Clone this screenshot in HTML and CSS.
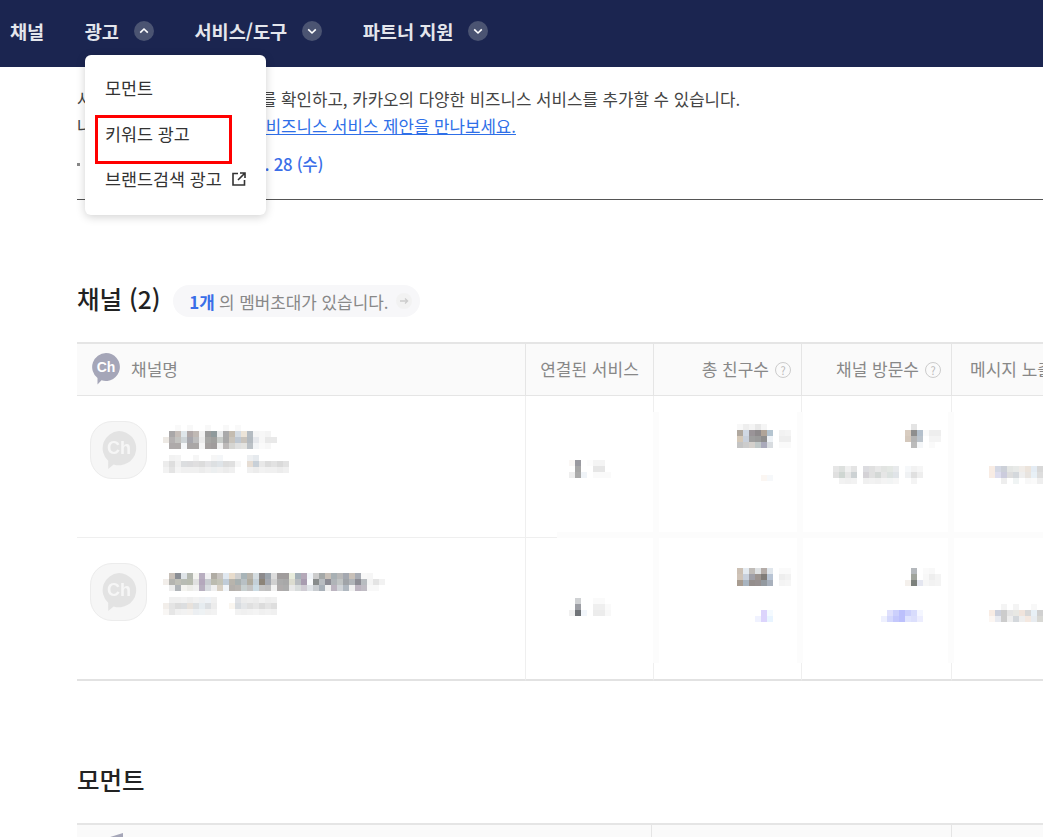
FILE: index.html
```html
<!DOCTYPE html>
<html lang="ko">
<head>
<meta charset="utf-8">
<title>비즈니스 대시보드</title>
<link rel="stylesheet" href="styles.css">
</head>
<body>
<header class="gnb">
  <a class="gnb-item">채널</a>
  <a class="gnb-item">광고<span class="chev"><svg viewBox="0 0 20 20" width="20" height="20"><path d="M6.2 11.6 10 8l3.8 3.6" /></svg></span></a>
  <a class="gnb-item">서비스/도구<span class="chev"><svg viewBox="0 0 20 20" width="20" height="20"><path d="M6.2 8.4 10 12l3.8-3.6" /></svg></span></a>
  <a class="gnb-item">파트너 지원<span class="chev"><svg viewBox="0 0 20 20" width="20" height="20"><path d="M6.2 8.4 10 12l3.8-3.6" /></svg></span></a>
</header>

<nav class="dropdown">
  <a class="drop-item">모먼트</a>
  <a class="drop-item">키워드 광고</a>
  <a class="drop-item">브랜드검색 광고<svg class="ext" viewBox="0 0 14 14" width="14" height="14"><path d="M6 1.5H1v11.5h11.5V8M8 1h5v5M13 1 6 8" /></svg></a>
</nav>
<div class="annotation"></div>

<main class="page">
  <section class="intro">
    <p class="intro-line">사용 중인 서비스 현황정보를 확인하고, 카카오의 다양한 비즈니스 서비스를 추가할 수 있습니다.</p>
    <p class="intro-line">나에게 꼭맞는 카카오 추천 <a class="intro-link">비즈니스 서비스 제안을 만나보세요.</a></p>
    <p class="intro-meta"><i class="dot"></i>최근 접속일 <b class="date">2024. 10. 28 (수)</b></p>
  </section>

  <section class="block">
    <div class="block-head">
      <h2 class="block-title">채널 (2)</h2>
      <a class="pill"><b class="pill-num">1개</b> 의 멤버초대가 있습니다.<span class="pill-go"><svg viewBox="0 0 16 16" width="16" height="16"><path d="M4 8h7.5M9 5.6 11.6 8 9 10.4" /></svg></span></a>
    </div>
    <div class="table-wrap">
      <table class="tbl">
        <colgroup><col class="w1"><col class="w2"><col class="w3"><col class="w4"><col class="w5"></colgroup>
        <thead>
          <tr>
            <th class="th-name"><span class="th-flex"><svg class="ch-mark" viewBox="0 0 28 32" width="28" height="32"><path class="ch-fill" d="M14 0a14 14 0 1 1-4.500 27.300L5.500 31.500V25A14 14 0 0 1 14 0Z"/><text class="ch-text" x="14" y="18.500" text-anchor="middle">Ch</text></svg>채널명</span></th>
            <th class="th-c">연결된 서비스</th>
            <th class="th-r">총 친구수<span class="q">?</span></th>
            <th class="th-r">채널 방문수<span class="q">?</span></th>
            <th class="th-l">메시지 노출수</th>
          </tr>
        </thead>
        <tbody>
          <tr class="r1">
            <td class="td-name"><div class="name-flex">
              <span class="avatar"><svg viewBox="0 0 40 44" width="36" height="40"><path class="av-fill" d="M20 1a19 19 0 1 1-6 37l-6 5v-9A19 19 0 0 1 20 1Z"/><text class="av-text" x="20" y="26" text-anchor="middle">Ch</text></svg></span>
              <div class="name-text">
                <svg class="mosaic" width="120" height="24" viewBox="0 0 20 4">
                  <rect x="2" y="0" fill="#f9f9f9"/><rect x="4" y="0" fill="#f8f8f8"/><rect x="7" y="0" fill="#f8f8f8"/><rect x="10" y="0" fill="#f8f8f8"/><rect x="12" y="0" fill="#f9f9f9"/>
                  <rect x="1" y="1" fill="#a9a7a8"/><rect x="2" y="1" fill="#c5bdb8"/><rect x="3" y="1" fill="#dfe6ea"/><rect x="4" y="1" fill="#b0a8a8"/><rect x="5" y="1" fill="#c0b9b4"/><rect x="6" y="1" fill="#f2f2f2"/><rect x="7" y="1" fill="#9c9c9c"/><rect x="8" y="1" fill="#8f9a9c"/><rect x="9" y="1" fill="#e8eaeb"/><rect x="10" y="1" fill="#a9a9aa"/><rect x="11" y="1" fill="#c4bcb0"/><rect x="12" y="1" fill="#d4dbe2"/><rect x="13" y="1" fill="#ece4d8"/><rect x="14" y="1" fill="#b5bcc2"/><rect x="15" y="1" fill="#f5f5f5"/><rect x="16" y="1" fill="#f7f7f7"/><rect x="17" y="1" fill="#f4f4f4"/>
                  <rect x="0" y="2" fill="#ede9e4"/><rect x="1" y="2" fill="#b4b1b1"/><rect x="2" y="2" fill="#c3c3c0"/><rect x="3" y="2" fill="#ced4d7"/><rect x="4" y="2" fill="#a7a7ad"/><rect x="5" y="2" fill="#bdbdbd"/><rect x="6" y="2" fill="#ececec"/><rect x="7" y="2" fill="#a6a6a4"/><rect x="8" y="2" fill="#a0a09e"/><rect x="9" y="2" fill="#c8ccc9"/><rect x="10" y="2" fill="#a8a8a8"/><rect x="11" y="2" fill="#c9c4bc"/><rect x="12" y="2" fill="#bfc8d2"/><rect x="13" y="2" fill="#c9c4bd"/><rect x="14" y="2" fill="#b3bac0"/><rect x="15" y="2" fill="#e6e8ec"/><rect x="16" y="2" fill="#f7f7f7"/><rect x="17" y="2" fill="#e9e9e9"/><rect x="18" y="2" fill="#e9e9e9"/>
                  <rect x="1" y="3" fill="#aeaaaa"/><rect x="2" y="3" fill="#aeaaa9"/><rect x="3" y="3" fill="#f5f7f9"/><rect x="4" y="3" fill="#a9a6a6"/><rect x="5" y="3" fill="#aaa7a6"/><rect x="6" y="3" fill="#f6f6f6"/><rect x="7" y="3" fill="#a4a09f"/><rect x="8" y="3" fill="#a09c9c"/><rect x="9" y="3" fill="#f0f0f0"/><rect x="10" y="3" fill="#bcb9b8"/><rect x="11" y="3" fill="#d5d5d2"/><rect x="12" y="3" fill="#dfe0e0"/><rect x="13" y="3" fill="#e3e3e0"/><rect x="14" y="3" fill="#bbc1c6"/><rect x="15" y="3" fill="#f2f4f6"/><rect x="16" y="3" fill="#fafafa"/><rect x="17" y="3" fill="#f7f7f7"/>
                </svg>
                <svg class="mosaic sub" width="126" height="18" viewBox="0 0 21 3">
                  <rect x="1" y="0" fill="#f2f2f2"/><rect x="2" y="0" fill="#f4f4f4"/><rect x="5" y="0" fill="#f6f6f6"/><rect x="8" y="0" fill="#f6f6f6"/><rect x="9" y="0" fill="#f4f6f8"/><rect x="14" y="0" fill="#eef0f2"/><rect x="15" y="0" fill="#e6eaee"/>
                  <rect x="0" y="1" fill="#ececec"/><rect x="1" y="1" fill="#dedede"/><rect x="2" y="1" fill="#f0f0f0"/><rect x="3" y="1" fill="#dcdee0"/><rect x="4" y="1" fill="#dcdcde"/><rect x="5" y="1" fill="#e0dfe0"/><rect x="6" y="1" fill="#dcdcdc"/><rect x="7" y="1" fill="#e4e4e6"/><rect x="8" y="1" fill="#dde0e2"/><rect x="9" y="1" fill="#dfe4e8"/><rect x="10" y="1" fill="#dddddd"/><rect x="11" y="1" fill="#e0e0e0"/><rect x="12" y="1" fill="#f6f6f6"/><rect x="14" y="1" fill="#e6ddd4"/><rect x="15" y="1" fill="#c8d0d8"/><rect x="16" y="1" fill="#e8e8e8"/><rect x="17" y="1" fill="#dcdcdc"/><rect x="18" y="1" fill="#e2e2e2"/><rect x="19" y="1" fill="#dadada"/><rect x="20" y="1" fill="#e2e2e2"/>
                  <rect x="0" y="2" fill="#f2f2f2"/><rect x="1" y="2" fill="#e4e4e4"/><rect x="2" y="2" fill="#f4f4f4"/><rect x="3" y="2" fill="#f0f0f0"/><rect x="4" y="2" fill="#f0f0f0"/><rect x="5" y="2" fill="#f0f0f0"/><rect x="6" y="2" fill="#ececec"/><rect x="7" y="2" fill="#f0f0f0"/><rect x="8" y="2" fill="#eceff0"/><rect x="9" y="2" fill="#f0f0f0"/><rect x="10" y="2" fill="#ececec"/><rect x="11" y="2" fill="#f0f0f0"/><rect x="14" y="2" fill="#f0f0f0"/><rect x="15" y="2" fill="#ececec"/><rect x="16" y="2" fill="#f2f2f2"/><rect x="17" y="2" fill="#f0f0f0"/><rect x="18" y="2" fill="#f0f0f0"/><rect x="19" y="2" fill="#ececec"/><rect x="20" y="2" fill="#f0f0f0"/>
                </svg>
              </div>
            </div></td>
            <td class="td-c"><svg class="mosaic svc-a" width="42" height="18" viewBox="0 0 7 3"><rect x="0" y="0" fill="#faf7f5"/><rect x="1" y="0" fill="#9a9aa0"/><rect x="3" y="0" fill="#fcfcfc"/><rect x="4" y="0" fill="#f4f4f4"/><rect x="5" y="0" fill="#f4f4f4"/><rect x="1" y="1" fill="#a6a6a6"/><rect x="4" y="1" fill="#e6e6e6"/><rect x="5" y="1" fill="#e6e6e6"/><rect x="0" y="2" fill="#eeeeee"/><rect x="1" y="2" fill="#aaaaaa"/><rect x="2" y="2" fill="#f0f4f8"/><rect x="4" y="2" fill="#fafafa"/><rect x="5" y="2" fill="#fafafa"/><rect x="6" y="2" fill="#fafafa"/></svg></td>
            <td class="td-r"><svg class="mosaic" width="54" height="24" viewBox="0 0 9 4"><rect x="0" y="0" fill="#f8f8f8"/><rect x="1" y="0" fill="#eeeeee"/><rect x="2" y="0" fill="#f4f4f4"/><rect x="3" y="0" fill="#e8e8e8"/><rect x="4" y="0" fill="#f5f5f5"/><rect x="0" y="1" fill="#b0a89f"/><rect x="1" y="1" fill="#d0d8e4"/><rect x="2" y="1" fill="#9a9498"/><rect x="3" y="1" fill="#8e8a8c"/><rect x="4" y="1" fill="#b0a498"/><rect x="5" y="1" fill="#b4c4d0"/><rect x="7" y="1" fill="#f2f2f2"/><rect x="8" y="1" fill="#f4f4f4"/><rect x="0" y="2" fill="#d4c8b8"/><rect x="1" y="2" fill="#c8d0dc"/><rect x="2" y="2" fill="#9e9e9e"/><rect x="3" y="2" fill="#9a9a9a"/><rect x="4" y="2" fill="#8e8e8e"/><rect x="5" y="2" fill="#eef2f6"/><rect x="7" y="2" fill="#eeeeee"/><rect x="8" y="2" fill="#eeeeee"/><rect x="0" y="3" fill="#c4c4c4"/><rect x="1" y="3" fill="#cccccc"/><rect x="2" y="3" fill="#d4d0cc"/><rect x="3" y="3" fill="#c0c8c8"/><rect x="4" y="3" fill="#aaaabb"/><rect x="5" y="3" fill="#d8dce0"/><rect x="7" y="3" fill="#fafafa"/><rect x="8" y="3" fill="#fafafa"/></svg>
              <svg class="mosaic faint-gap" width="12" height="6" viewBox="0 0 2 1"><rect x="0" y="0" fill="#fbf6f2"/><rect x="1" y="0" fill="#f6f8fa"/></svg></td>
            <td class="td-r"><svg class="mosaic" width="36" height="24" viewBox="0 0 6 4"><rect x="1" y="0" fill="#e4e4e4"/><rect x="0" y="1" fill="#d8ccc0"/><rect x="1" y="1" fill="#8e8e8e"/><rect x="2" y="1" fill="#b4c0cc"/><rect x="3" y="1" fill="#fafafa"/><rect x="4" y="1" fill="#eeeeee"/><rect x="5" y="1" fill="#eeeeee"/><rect x="0" y="2" fill="#d4c8bc"/><rect x="1" y="2" fill="#b4b4b4"/><rect x="2" y="2" fill="#bcc4cc"/><rect x="4" y="2" fill="#f4f4f4"/><rect x="5" y="2" fill="#f4f4f4"/><rect x="1" y="3" fill="#bbbbbb"/><rect x="2" y="3" fill="#f4f6f8"/><rect x="4" y="3" fill="#fafafa"/></svg>
              <svg class="mosaic second" width="108" height="18" viewBox="0 0 18 3"><rect x="0" y="0" fill="#e6e6e6"/><rect x="1" y="0" fill="#dde0de"/><rect x="2" y="0" fill="#f0f0f0"/><rect x="3" y="0" fill="#e4e4e4"/><rect x="5" y="0" fill="#dcdce0"/><rect x="6" y="0" fill="#e0e0e0"/><rect x="7" y="0" fill="#e8e8e8"/><rect x="8" y="0" fill="#e2e4e2"/><rect x="9" y="0" fill="#e4e8e4"/><rect x="10" y="0" fill="#e8eaec"/><rect x="12" y="0" fill="#f6f8fa"/><rect x="13" y="0" fill="#f2f2f2"/><rect x="14" y="0" fill="#f6f6f6"/><rect x="0" y="1" fill="#e0e0e0"/><rect x="1" y="1" fill="#cfd6d2"/><rect x="2" y="1" fill="#e6e6e6"/><rect x="3" y="1" fill="#cdd2d4"/><rect x="5" y="1" fill="#d4d2d6"/><rect x="6" y="1" fill="#e0e0e0"/><rect x="7" y="1" fill="#d4d8d6"/><rect x="8" y="1" fill="#e6e6e6"/><rect x="9" y="1" fill="#dce2e0"/><rect x="10" y="1" fill="#e0e4e8"/><rect x="12" y="1" fill="#f0f2f4"/><rect x="13" y="1" fill="#e0e0e0"/><rect x="14" y="1" fill="#eeeeee"/><rect x="1" y="2" fill="#f2f2f2"/><rect x="2" y="2" fill="#f0f0f0"/><rect x="3" y="2" fill="#f2f2f2"/><rect x="5" y="2" fill="#f0f0f0"/><rect x="6" y="2" fill="#f2f2f2"/><rect x="7" y="2" fill="#f0f0f0"/><rect x="8" y="2" fill="#f4f4f4"/><rect x="9" y="2" fill="#f2f4f4"/><rect x="10" y="2" fill="#f6f6f6"/><rect x="13" y="2" fill="#f4f4f4"/></svg></td>
            <td class="td-l"><svg class="mosaic msg-a" width="54" height="18" viewBox="0 0 9 3"><rect x="0" y="0" fill="#f8ece4"/><rect x="1" y="0" fill="#d4d8e4"/><rect x="2" y="0" fill="#ccd0d8"/><rect x="3" y="0" fill="#e4e6e4"/><rect x="4" y="0" fill="#e8eae8"/><rect x="5" y="0" fill="#f0ece8"/><rect x="6" y="0" fill="#ece4dc"/><rect x="7" y="0" fill="#e4ecf4"/><rect x="8" y="0" fill="#d8d8d8"/><rect x="0" y="1" fill="#f8ece4"/><rect x="1" y="1" fill="#ddddee"/><rect x="2" y="1" fill="#ccccdd"/><rect x="3" y="1" fill="#dddddd"/><rect x="4" y="1" fill="#d4d8dc"/><rect x="5" y="1" fill="#eeeeee"/><rect x="6" y="1" fill="#e8e4e0"/><rect x="7" y="1" fill="#e8f0f6"/><rect x="8" y="1" fill="#dddddd"/><rect x="2" y="2" fill="#eeeeee"/><rect x="4" y="2" fill="#f0f4f4"/><rect x="6" y="2" fill="#f8f8f8"/><rect x="7" y="2" fill="#fafafa"/><rect x="8" y="2" fill="#eeeeee"/></svg></td>
          </tr>
          <tr class="r2">
            <td class="td-name"><div class="name-flex">
              <span class="avatar"><svg viewBox="0 0 40 44" width="36" height="40"><path class="av-fill" d="M20 1a19 19 0 1 1-6 37l-6 5v-9A19 19 0 0 1 20 1Z"/><text class="av-text" x="20" y="26" text-anchor="middle">Ch</text></svg></span>
              <div class="name-text">
                <svg class="mosaic" width="222" height="18" viewBox="0 0 37 3">
                  <g transform="translate(-2 0)">
                  <rect x="3" y="0" fill="#c8c0b8"/><rect x="4" y="0" fill="#8a8e94"/><rect x="5" y="0" fill="#dfe4e8"/><rect x="6" y="0" fill="#b4b8b0"/><rect x="7" y="0" fill="#f4f4f0"/><rect x="8" y="0" fill="#b8aec0"/><rect x="9" y="0" fill="#f0f0f2"/><rect x="10" y="0" fill="#b0aca4"/><rect x="11" y="0" fill="#c8c4c0"/><rect x="12" y="0" fill="#e0e8f0"/><rect x="13" y="0" fill="#e8dccc"/><rect x="14" y="0" fill="#d0d0d0"/><rect x="15" y="0" fill="#a8b4b8"/><rect x="16" y="0" fill="#b8b4ac"/><rect x="17" y="0" fill="#d4dce0"/><rect x="18" y="0" fill="#8c8a8c"/><rect x="19" y="0" fill="#9ca4ac"/><rect x="20" y="0" fill="#dcdcdc"/><rect x="21" y="0" fill="#a09c9c"/><rect x="22" y="0" fill="#a09c9c"/><rect x="23" y="0" fill="#e8ecdc"/><rect x="24" y="0" fill="#a4b0b8"/><rect x="25" y="0" fill="#b4a8b8"/><rect x="26" y="0" fill="#f0f4f8"/><rect x="27" y="0" fill="#cccccc"/><rect x="28" y="0" fill="#a4a8a8"/><rect x="29" y="0" fill="#c8c0b8"/><rect x="30" y="0" fill="#a8b0b4"/>
                  <rect x="2" y="1" fill="#c0c0c0"/><rect x="3" y="1" fill="#b4b4b0"/><rect x="4" y="1" fill="#c0c0b8"/><rect x="5" y="1" fill="#b8bcb4"/><rect x="6" y="1" fill="#b8bcb0"/><rect x="7" y="1" fill="#e0e0e0"/><rect x="8" y="1" fill="#b4a8bc"/><rect x="9" y="1" fill="#c8ccd0"/><rect x="10" y="1" fill="#bcbcb0"/><rect x="11" y="1" fill="#c4c4b8"/><rect x="12" y="1" fill="#c0ccd8"/><rect x="13" y="1" fill="#b8b4ac"/><rect x="14" y="1" fill="#a8b0b0"/><rect x="15" y="1" fill="#b8c0c4"/><rect x="16" y="1" fill="#b0aca0"/><rect x="17" y="1" fill="#c4d0d8"/><rect x="18" y="1" fill="#8c8478"/><rect x="19" y="1" fill="#a4a8b0"/><rect x="20" y="1" fill="#d0d0d0"/><rect x="21" y="1" fill="#ababab"/><rect x="22" y="1" fill="#a8a8a8"/><rect x="23" y="1" fill="#dcdcd0"/><rect x="24" y="1" fill="#b8bcc0"/><rect x="25" y="1" fill="#a89cb0"/><rect x="26" y="1" fill="#f8fafc"/><rect x="27" y="1" fill="#888c8c"/><rect x="28" y="1" fill="#b8bcc0"/><rect x="29" y="1" fill="#8c8c94"/><rect x="30" y="1" fill="#b0b4b8"/>
                  <rect x="3" y="2" fill="#ececec"/><rect x="4" y="2" fill="#b0b4b8"/><rect x="5" y="2" fill="#f4f4f0"/><rect x="6" y="2" fill="#ecece8"/><rect x="7" y="2" fill="#f0f0f0"/><rect x="8" y="2" fill="#b8b0c0"/><rect x="9" y="2" fill="#d8dce0"/><rect x="10" y="2" fill="#f0f0f0"/><rect x="11" y="2" fill="#d8d0c4"/><rect x="12" y="2" fill="#f0f4f8"/><rect x="13" y="2" fill="#b4b0ac"/><rect x="14" y="2" fill="#b8b4b0"/><rect x="15" y="2" fill="#c8d0d0"/><rect x="16" y="2" fill="#c4c4c4"/><rect x="17" y="2" fill="#ccdce4"/><rect x="18" y="2" fill="#c4c4c4"/><rect x="19" y="2" fill="#c0c0c0"/><rect x="20" y="2" fill="#f2f2f2"/><rect x="21" y="2" fill="#b0acac"/><rect x="22" y="2" fill="#acacac"/><rect x="23" y="2" fill="#e8e8e8"/><rect x="24" y="2" fill="#d8dcdc"/><rect x="25" y="2" fill="#d0ccd4"/><rect x="26" y="2" fill="#e0e4e8"/><rect x="27" y="2" fill="#c8ccd0"/><rect x="28" y="2" fill="#a8b0b8"/><rect x="29" y="2" fill="#f0f0f0"/><rect x="30" y="2" fill="#bcb4c0"/>
                  </g>
                  <rect x="0" y="1" fill="#f2eeea"/><rect x="29" y="0" fill="#b8b8b8"/><rect x="30" y="0" fill="#a4a8b0"/><rect x="31" y="0" fill="#c8c0b8"/><rect x="32" y="0" fill="#a8acb4"/><rect x="33" y="0" fill="#f8f8f8"/><rect x="34" y="0" fill="#f6f6f6"/>
                  <rect x="29" y="1" fill="#c0c4c4"/><rect x="30" y="1" fill="#a0a4a8"/><rect x="31" y="1" fill="#b0b4b8"/><rect x="32" y="1" fill="#8c8c94"/><rect x="33" y="1" fill="#b8bcc0"/><rect x="34" y="1" fill="#f4f4f4"/><rect x="35" y="1" fill="#e4e4e4"/><rect x="36" y="1" fill="#f2f2f2"/>
                  <rect x="29" y="2" fill="#d0d4d8"/><rect x="30" y="2" fill="#b0b8c0"/><rect x="31" y="2" fill="#f0f0f0"/><rect x="32" y="2" fill="#bcb4c0"/><rect x="33" y="2" fill="#c0bcc4"/><rect x="34" y="2" fill="#f8f8f8"/><rect x="35" y="2" fill="#f8f8f8"/>
                </svg>
                <svg class="mosaic sub" width="114" height="18" viewBox="0 0 19 3">
                  <rect x="1" y="0" fill="#f0f0f0"/><rect x="2" y="0" fill="#f0f0f0"/><rect x="3" y="0" fill="#f2f2f2"/><rect x="4" y="0" fill="#eeeeee"/><rect x="5" y="0" fill="#f2f2f2"/><rect x="6" y="0" fill="#eef0f2"/><rect x="7" y="0" fill="#eef2f6"/><rect x="8" y="0" fill="#f0f0f0"/><rect x="12" y="0" fill="#e0e2e6"/><rect x="13" y="0" fill="#ececec"/><rect x="14" y="0" fill="#eeeeee"/><rect x="15" y="0" fill="#ececec"/><rect x="16" y="0" fill="#f2f2f2"/><rect x="17" y="0" fill="#eeeeee"/><rect x="18" y="0" fill="#f0f0f0"/>
                  <rect x="0" y="1" fill="#f2eeea"/><rect x="1" y="1" fill="#e4e4e4"/><rect x="2" y="1" fill="#dcdcdc"/><rect x="3" y="1" fill="#dcdee0"/><rect x="4" y="1" fill="#e8e2dc"/><rect x="5" y="1" fill="#dde0e2"/><rect x="6" y="1" fill="#e6ecf0"/><rect x="7" y="1" fill="#dcdfe2"/><rect x="8" y="1" fill="#ececec"/><rect x="11" y="1" fill="#faf6f0"/><rect x="12" y="1" fill="#d8dce0"/><rect x="13" y="1" fill="#e4e6e8"/><rect x="14" y="1" fill="#e0e0e0"/><rect x="15" y="1" fill="#e6e6e6"/><rect x="16" y="1" fill="#dcdcdc"/><rect x="17" y="1" fill="#e4e4e4"/><rect x="18" y="1" fill="#dedede"/>
                  <rect x="0" y="2" fill="#f8f6f4"/><rect x="1" y="2" fill="#e6e6e6"/><rect x="2" y="2" fill="#f0f0f0"/><rect x="3" y="2" fill="#f2f2f2"/><rect x="4" y="2" fill="#f4f2f0"/><rect x="5" y="2" fill="#eceff2"/><rect x="6" y="2" fill="#eef2f4"/><rect x="7" y="2" fill="#f0f0f0"/><rect x="8" y="2" fill="#f2f2f2"/><rect x="12" y="2" fill="#f2f2f2"/><rect x="13" y="2" fill="#f0f0f0"/><rect x="14" y="2" fill="#f2f2f2"/><rect x="15" y="2" fill="#f4f4f4"/><rect x="16" y="2" fill="#f0f0f0"/><rect x="17" y="2" fill="#f2f2f2"/><rect x="18" y="2" fill="#f0f0f0"/>
                </svg>
              </div>
            </div></td>
            <td class="td-c"><svg class="mosaic svc-b" width="42" height="18" viewBox="0 0 7 3"><rect x="1" y="0" fill="#d0d2d4"/><rect x="4" y="0" fill="#fafafa"/><rect x="5" y="0" fill="#fafafa"/><rect x="1" y="1" fill="#9c9ea4"/><rect x="4" y="1" fill="#efefef"/><rect x="5" y="1" fill="#efefef"/><rect x="6" y="1" fill="#fafafa"/><rect x="0" y="2" fill="#f0f0f0"/><rect x="1" y="2" fill="#707478"/><rect x="2" y="2" fill="#f2f6fb"/><rect x="4" y="2" fill="#ececec"/><rect x="5" y="2" fill="#ececec"/><rect x="6" y="2" fill="#f8f8f8"/></svg></td>
            <td class="td-r"><svg class="mosaic" width="54" height="18" viewBox="0 0 9 3"><rect x="0" y="0" fill="#ccc0b4"/><rect x="1" y="0" fill="#e4eaf0"/><rect x="2" y="0" fill="#c0bcb8"/><rect x="3" y="0" fill="#dfe2e4"/><rect x="4" y="0" fill="#b4aca8"/><rect x="5" y="0" fill="#e0e6ec"/><rect x="7" y="0" fill="#fafafa"/><rect x="8" y="0" fill="#fafafa"/><rect x="0" y="1" fill="#d0c4b8"/><rect x="1" y="1" fill="#c8d0dc"/><rect x="2" y="1" fill="#a0a0a8"/><rect x="3" y="1" fill="#9c9490"/><rect x="4" y="1" fill="#807c78"/><rect x="5" y="1" fill="#b8c4d4"/><rect x="7" y="1" fill="#eeeeee"/><rect x="8" y="1" fill="#f2f2f2"/><rect x="0" y="2" fill="#a89c90"/><rect x="1" y="2" fill="#a8b4c0"/><rect x="2" y="2" fill="#948e8c"/><rect x="3" y="2" fill="#969090"/><rect x="4" y="2" fill="#949aa0"/><rect x="5" y="2" fill="#a8b0bc"/><rect x="7" y="2" fill="#f4f4f4"/><rect x="8" y="2" fill="#f6f6f6"/></svg>
              <svg class="mosaic blue-gap" width="18" height="12" viewBox="0 0 3 2"><rect x="1" y="0" fill="#dcd4fc"/><rect x="2" y="0" fill="#f4faff"/><rect x="0" y="1" fill="#f0f2ff"/><rect x="1" y="1" fill="#dcd4fc"/><rect x="2" y="1" fill="#e8f4ff"/></svg></td>
            <td class="td-r"><svg class="mosaic" width="36" height="18" viewBox="0 0 6 3"><rect x="1" y="0" fill="#b4b8bc"/><rect x="3" y="0" fill="#fafafa"/><rect x="4" y="0" fill="#f8f8f8"/><rect x="1" y="1" fill="#a0a49c"/><rect x="3" y="1" fill="#f8f8f8"/><rect x="4" y="1" fill="#eeeeee"/><rect x="5" y="1" fill="#f4f4f4"/><rect x="0" y="2" fill="#f4f0ec"/><rect x="1" y="2" fill="#7c807c"/><rect x="2" y="2" fill="#e4e6f0"/><rect x="3" y="2" fill="#f6f6f6"/><rect x="4" y="2" fill="#f2f2f2"/><rect x="5" y="2" fill="#f4f4f4"/></svg>
              <svg class="mosaic blue-gap" width="42" height="12" viewBox="0 0 7 2"><rect x="1" y="0" fill="#dfe0fc"/><rect x="2" y="0" fill="#ccd0fc"/><rect x="3" y="0" fill="#bcc0fc"/><rect x="4" y="0" fill="#ccd0fc"/><rect x="5" y="0" fill="#d8dcfc"/><rect x="6" y="0" fill="#f4f6ff"/><rect x="0" y="1" fill="#eef0fe"/><rect x="1" y="1" fill="#d4d8fc"/><rect x="2" y="1" fill="#c4c8fc"/><rect x="3" y="1" fill="#bcc0fc"/><rect x="4" y="1" fill="#e0e4fe"/><rect x="5" y="1" fill="#dcdffc"/><rect x="6" y="1" fill="#ecedfe"/></svg></td>
            <td class="td-l"><svg class="mosaic msg-b" width="54" height="18" viewBox="0 0 9 3"><rect x="2" y="0" fill="#f4f4f4"/><rect x="4" y="0" fill="#f4f4f4"/><rect x="7" y="0" fill="#f8f8f8"/><rect x="0" y="1" fill="#f8ece4"/><rect x="1" y="1" fill="#ccd0dc"/><rect x="2" y="1" fill="#cccccc"/><rect x="3" y="1" fill="#e4e4e4"/><rect x="4" y="1" fill="#e8e8e4"/><rect x="5" y="1" fill="#f0e4dc"/><rect x="6" y="1" fill="#d8d8d8"/><rect x="7" y="1" fill="#e8f0f6"/><rect x="8" y="1" fill="#d0d0d0"/><rect x="0" y="2" fill="#fcf6f2"/><rect x="1" y="2" fill="#e8eaf0"/><rect x="2" y="2" fill="#cccccc"/><rect x="3" y="2" fill="#eeeeee"/><rect x="4" y="2" fill="#d4d8dc"/><rect x="5" y="2" fill="#eeeeee"/><rect x="6" y="2" fill="#f4e8e0"/><rect x="7" y="2" fill="#e8ecf0"/><rect x="8" y="2" fill="#d8d8d4"/></svg></td>
          </tr>
        </tbody>
      </table>
      <i class="veil veil-a"></i><i class="veil veil-b"></i><i class="veil veil-c"></i><i class="veil veil-h"></i>
    </div>
  </section>

  <section class="block">
    <div class="block-head">
      <h2 class="block-title">모먼트</h2>
    </div>
    <table class="tbl">
      <colgroup><col class="m1"><col class="m2"><col class="m3"></colgroup>
      <thead>
        <tr>
          <th class="th-name mega-cell"><svg class="mega" viewBox="0 0 16 20" width="16" height="20"><path d="M0 5 16 0v20L0 15Z"/></svg></th>
          <th></th>
          <th></th>
        </tr>
      </thead>
    </table>
  </section>
</main>
</body>
</html>
```

FILE: styles.css
```css
* { box-sizing: border-box; }
html, body { margin: 0; height: 837px; overflow: hidden; background: #fff; }
body {
  position: relative;
  font-family: "Noto Sans CJK KR", "Noto Sans", sans-serif;
  color: #333;
}

/* top bar */
.gnb {
  display: flex;
  align-items: center;
  gap: 40.5px;
  height: 67px;
  padding: 0 0 7px 10px;
  background: #1b2550;
}
.gnb-item {
  display: flex;
  align-items: center;
  font-size: 18.6px;
  font-weight: 700;
  color: #e4e6ec;
  white-space: nowrap;
}
.chev {
  display: flex;
  width: 20px;
  height: 20px;
  margin: 2px 0 0 15px;
  border-radius: 50%;
  background: #4b5472;
}
.chev path { fill: none; stroke: #fff; stroke-width: 1.6; }

/* dropdown */
.dropdown {
  position: absolute;
  left: 85px;
  top: 55px;
  width: 181px;
  height: 160px;
  padding-top: 10px;
  background: #fff;
  border-radius: 6px;
  box-shadow: 0 2px 10px rgba(0, 0, 0, .18);
  z-index: 3;
}
.drop-item {
  display: flex;
  align-items: center;
  height: 45.5px;
  padding-left: 20px;
  font-size: 17.4px;
  color: #333;
  white-space: nowrap;
}
.ext { margin-left: 10px; }
.ext path { fill: none; stroke: #333; stroke-width: 1.6; }
.annotation {
  position: absolute;
  left: 95px;
  top: 115px;
  width: 137px;
  height: 49px;
  border: 3px solid #f00;
  z-index: 4;
}

/* intro */
.page { padding-left: 77px; }
.intro {
  height: 133px;
  padding: 19px 0 0;
  border-bottom: 1px solid #555;
}
.intro-line {
  margin: 0;
  font-size: 16.8px;
  line-height: 27px;
  color: #444;
  white-space: nowrap;
}
.intro-link { color: #2f6fe8; text-decoration: underline; }
.intro-meta {
  display: flex;
  align-items: center;
  margin: 11px 0 0;
  font-size: 16.8px;
  line-height: 27px;
  color: #444;
  white-space: nowrap;
}
.dot { width: 3px; height: 3px; margin-right: 10px; background: #888; }
.date { margin-left: 28px; font-weight: 500; letter-spacing: -.3px; color: #3a6ee8; }

/* sections */
.block-head {
  display: flex;
  align-items: center;
  height: 32px;
  margin-top: 85px;
  margin-bottom: 25px;
}
.block-title {
  margin: 0;
  padding-bottom: 6px;
  font-size: 24.5px;
  font-weight: 500;
  color: #222;
  white-space: nowrap;
}
.pill {
  display: flex;
  align-items: center;
  height: 32px;
  margin-left: 13px;
  padding: 0 8px 0 16px;
  border-radius: 16px;
  background: #f7f7f9;
  font-size: 16.9px;
  color: #888;
  white-space: nowrap;
}
.pill-num { margin-right: 4px; font-weight: 700; color: #3a6ee8; }
.pill-go {
  display: flex;
  width: 16px;
  height: 16px;
  margin-left: 8px;
  border-radius: 50%;
  background: #f2f2f2;
}
.pill-go path { fill: none; stroke: #ccc; stroke-width: 1.3; }

/* tables */
.table-wrap { position: relative; width: 1075px; }
.tbl {
  width: 1075px;
  table-layout: fixed;
  border-collapse: separate;
  border-spacing: 0;
}
.w1 { width: 449px; }
.w2 { width: 128px; }
.w3 { width: 148px; }
.w4 { width: 150px; }
.w5 { width: 200px; }
.m1 { width: 575px; }
.m2 { width: 300px; }
.m3 { width: 200px; }

.tbl th {
  height: 54px;
  padding: 0 0 2px;
  background: #fafafa;
  border-top: 2px solid #e5e5e5;
  border-bottom: 1px solid #e5e5e5;
  border-right: 1px solid #e5e5e5;
  font-size: 17px;
  font-weight: 400;
  color: #888;
  white-space: nowrap;
}
.tbl th:last-child { border-right: 0; }
.tbl .th-name { padding-left: 15px; text-align: left; }
.th-flex { display: flex; align-items: center; gap: 11px; }
.tbl .th-c { text-align: center; }
.tbl .th-r { padding-right: 10px; text-align: right; }
.tbl .th-l { padding-left: 18px; text-align: left; }
.ch-fill { fill: #a5a6b8; }
.ch-text { font: 700 14px "Liberation Sans", sans-serif; fill: #fff; }
.q {
  display: inline-block;
  width: 16px;
  height: 16px;
  margin-left: 6px;
  border: 1px solid #ccc;
  border-radius: 50%;
  font-size: 11px;
  line-height: 14px;
  text-align: center;
  color: #bbb;
  vertical-align: 1px;
}

.tbl td {
  height: 142px;
  padding: 0;
  vertical-align: top;
  border-right: 1px solid #efefef;
  border-bottom: 1px solid #efefef;
}
.tbl td:last-child { border-right: 0; }
.tbl .r2 td { height: 143px; border-bottom: 2px solid #e2e2e2; }
.mosaic { display: block; shape-rendering: crispEdges; }
.mosaic rect { width: 1px; height: 1px; }

.tbl .td-name { padding: 25px 0 0 13px; }
.name-flex { display: flex; gap: 16px; }
.avatar {
  display: flex;
  align-items: center;
  justify-content: center;
  flex: none;
  width: 57px;
  height: 58px;
  background: #f6f6f6;
  border: 1px solid #ececec;
  border-radius: 22px;
}
.avatar svg { filter: blur(.6px); }
.av-fill { fill: #e3e3e3; }
.av-text { font: 700 20px "Liberation Sans", sans-serif; fill: #f6f6f6; }
.name-text { padding-top: 4px; }
.r2 .name-text { padding-top: 10px; }
.sub { margin-top: 6px; }
.td-c .mosaic { margin-left: auto; margin-right: auto; }
.td-c .svc-a { margin-top: 64px; }
.td-c .svc-b { margin-top: 60px; }
.tbl .td-r { padding: 28px 10px 0 0; }
.tbl .r2 .td-r { padding-top: 30px; }
.td-r .mosaic { margin-left: auto; }
.td-r .faint-gap { margin-top: 27px; margin-right: 18px; }
.td-r .second { margin-top: 18px; }
.td-r .blue-gap { margin-top: 24px; margin-right: 18px; }
.tbl .td-l { padding-left: 37px; }
.msg-a { margin-top: 70px; }
.msg-b { margin-top: 66px; }

.veil { position: absolute; display: block; background: #fcfcfc; }
.veil-a { left: 576px; top: 70px; width: 6px; height: 251px; }
.veil-b { left: 720px; top: 70px; width: 6px; height: 251px; }
.veil-c { left: 871px; top: 70px; width: 6px; height: 251px; }
.veil-h { left: 480px; top: 190px; width: 595px; height: 6px; }

.tbl .mega-cell { padding-top: 8px; vertical-align: top; }
.mega { display: block; margin-left: 15px; }
.mega path { fill: #a5a6b8; }
```
